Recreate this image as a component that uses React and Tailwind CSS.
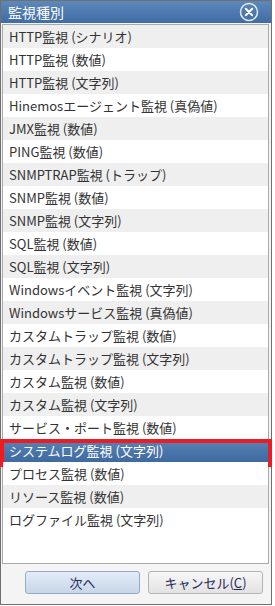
import React from 'react';

const items = [
  'HTTP監視 (シナリオ)',
  'HTTP監視 (数値)',
  'HTTP監視 (文字列)',
  'Hinemosエージェント監視 (真偽値)',
  'JMX監視 (数値)',
  'PING監視 (数値)',
  'SNMPTRAP監視 (トラップ)',
  'SNMP監視 (数値)',
  'SNMP監視 (文字列)',
  'SQL監視 (数値)',
  'SQL監視 (文字列)',
  'Windowsイベント監視 (文字列)',
  'Windowsサービス監視 (真偽値)',
  'カスタムトラップ監視 (数値)',
  'カスタムトラップ監視 (文字列)',
  'カスタム監視 (数値)',
  'カスタム監視 (文字列)',
  'サービス・ポート監視 (数値)',
  'システムログ監視 (文字列)',
  'プロセス監視 (数値)',
  'リソース監視 (数値)',
  'ログファイル監視 (文字列)',
];

const SELECTED = 18;

const CloseIcon = () => (
  <svg width="20" height="20" viewBox="0 0 20 20" fill="none">
    <circle cx="10" cy="10" r="8.5" stroke="#ffffff" strokeOpacity="0.85" strokeWidth="1.5" />
    <path d="M6.8 6.8 L13.2 13.2 M13.2 6.8 L6.8 13.2" stroke="#ffffff" strokeWidth="2" strokeLinecap="round" />
  </svg>
);

export default function App() {
  return (
    <div
      className="w-[272px] h-[605px] border border-[#707070] bg-[#f4f4f4] flex flex-col"
      style={{ fontFamily: '"Noto Sans CJK JP", "Noto Sans", sans-serif' }}
    >
      {/* Title bar */}
      <div className="h-[22px] shrink-0 flex items-center justify-between pl-[7px] pr-[12px] bg-gradient-to-b from-[#5d88ba] to-[#3f6ca4]">
        <span className="text-[14px] leading-none text-white">監視種別</span>
        <CloseIcon />
      </div>

      {/* List */}
      <div className="mt-[1px] ml-[1px] mr-[2px] h-[540px] shrink-0 border border-[#a9a9a9] bg-white">
        {items.map((label, i) => {
          const selected = i === SELECTED;
          return (
            <div
              key={label}
              className={`relative h-[23px] flex items-center pl-[6px] text-[13px] leading-none ${
                selected
                  ? 'text-white bg-gradient-to-b from-[#5a84b6] to-[#3e6aa1]'
                  : i % 2 === 0
                  ? 'text-[#333333] bg-[#efefef]'
                  : 'text-[#333333] bg-white'
              }`}
            >
              {label}
              {selected && (
                <div className="absolute top-0 -bottom-[5px] -left-[3px] -right-[4px] border-4 border-[#ea1c24]" />
              )}
            </div>
          );
        })}
      </div>

      {/* Buttons */}
      <div className="flex gap-[8px] pl-[24px] mt-[7px]">
        <button className="w-[115px] h-[23px] rounded-[3px] border border-[#93abcb] bg-gradient-to-b from-[#e3ecf7] to-[#c8d6e8] text-[13px] leading-none text-[#1f2a5a]">
          次へ
        </button>
        <button className="w-[115px] h-[23px] rounded-[3px] border border-[#b4b4b4] bg-gradient-to-b from-[#f7f7f7] to-[#e2e2e2] text-[13px] leading-none text-[#1f2a5a]">
          キャンセル(<span className="underline">C</span>)
        </button>
      </div>
    </div>
  );
}
